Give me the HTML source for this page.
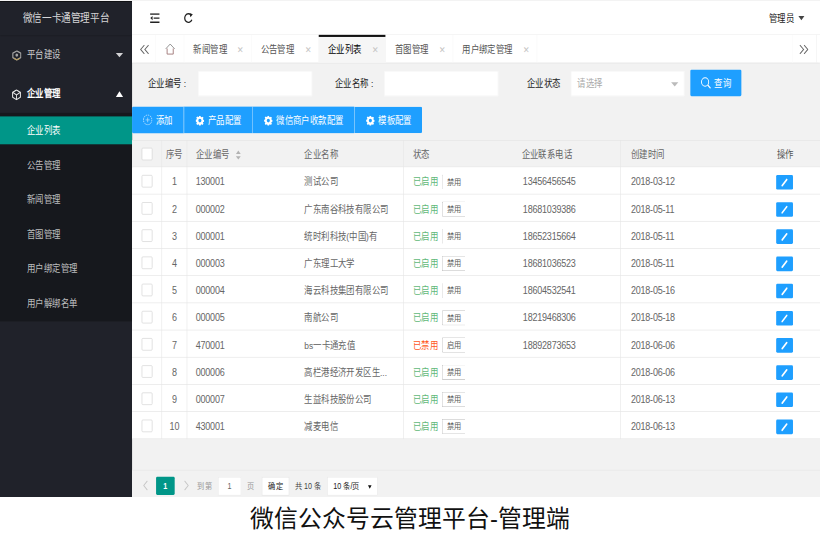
<!DOCTYPE html>
<html lang="zh-CN">
<head>
<meta charset="utf-8">
<title>微信公众号云管理平台-管理端</title>
<style>
*{box-sizing:border-box;margin:0;padding:0}
html,body{width:820px;height:540px;overflow:hidden;background:#fff}
body{position:relative;font-family:"Liberation Sans",sans-serif;}
#shot{position:absolute;left:0;top:0;width:1366px;height:713px;transform-origin:0 0;transform:scale(0.60029,0.69705);background:#f2f2f2;overflow:hidden;font-size:14px;color:#666;line-height:1}
#shot *{position:absolute}
.abs{position:absolute}
/* sidebar */
#side{left:0;top:0;width:220px;height:713px;background:#20222a}
#logo{left:0;top:0;width:220px;height:50px;line-height:54px;text-align:center;font-size:16px;color:rgba(255,255,255,.82);box-shadow:0 1px 2px 0 rgba(0,0,0,.15)}
.mi{left:0;width:220px;height:56px;line-height:56px;color:#fff}
.mi span{left:45px;top:0;white-space:nowrap}
.mi svg{left:19px;top:19px}
.tri{width:0;height:0;border:6px solid transparent}
#child{left:0;top:162px;width:220px;height:299px;background:#16181d}
.ci{left:0;width:220px;height:40px;line-height:40px;color:rgba(255,255,255,.72);white-space:nowrap}
.ci span{left:45px;top:0}
.ci.on{background:#009688;color:#fff}
/* header */
#hdr{left:220px;top:0;width:1146px;height:50px;background:#fff;border-bottom:1px solid #f0f0f0}
#tabs{left:220px;top:50px;width:1146px;height:40px;background:#fff;box-shadow:0 1px 2px 0 rgba(0,0,0,.12)}
.tab{top:0;height:40px;line-height:43px;color:#555;border-right:1px solid #f7f7f7;white-space:nowrap}
.tab span{left:15px;top:0}
.tab i{right:8px;top:0;width:18px;text-align:center;font-style:normal;color:#c4c4c4;font-size:13px}
.tab.on{background:#f6f6f6;color:#000}
.tab.on:before{content:"";position:absolute;left:0;top:0;width:100%;height:2.5px;background:#111}
/* form */
.lbl{top:100px;height:38px;line-height:41px;color:#222;text-align:right;white-space:nowrap}
.inp{top:102px;height:36px;background:#fff;border:1px solid #f6f6f6}
.btn{background:#1e9fff;color:#fff;height:38px;line-height:40px;white-space:nowrap}
/* table */
#thead{left:220px;top:201px;width:1146px;height:39px;background:#f2f2f2;border-top:1px solid #e6e6e6;border-bottom:1px solid #e6e6e6}
#tbody{left:220px;top:240px;width:1146px;height:390px;background:#fff}
.row{left:0;width:1146px;height:39px;border-bottom:1px solid #e6e6e6;line-height:38px;white-space:nowrap}
.vl{top:201px;width:1px;height:429px;background:#e6e6e6}
.cb{left:16px;top:11px;width:18px;height:18px;border:1px solid #d2d2d2;background:#fff;border-radius:2px}
.c1{left:50px;width:41px;text-align:center;top:2px}
.row .c1,.row .c2,.row .c5,.row .c6{font-size:15px;letter-spacing:-.35px}
.c2{left:106px;top:2px}
.c3{left:287px;top:2px}
.c4{left:468px;top:2px;color:#5fb878}
.c4.off{color:#ff5722}
.sb{left:516px;top:10px;width:39px;height:22px;line-height:20px;border:1px solid #b8b8b8;border-radius:2px 0 0 2px;border-right:none;font-size:12px;color:#555;background:#fff}
.sb b{left:7px;top:0;font-weight:normal}
.sb.l{border-top-color:transparent;border-bottom-color:transparent}
.c5{left:600px;width:190px;text-align:center;top:2px}
.c6{left:831px;top:2px}
.eb{left:1073px;top:11px;width:28px;height:21px;background:#1e9fff;border-radius:2px}
.eb svg{left:7px;top:4px}
/* pager */
#pager{left:220px;top:674px;width:1146px;height:39px;border-top:1px solid #e6e6e6;background:#f2f2f2;font-size:12px;color:#333;line-height:28px;white-space:nowrap}
#cap{position:absolute;left:0;top:502px;width:820px;text-align:center;font-size:23.8px;line-height:34px;color:#111;white-space:nowrap}
</style>
</head>
<body>
<div id="shot">
 <div id="side">
  <div id="logo">微信一卡通管理平台</div>
  <div class="mi" style="top:50px;color:rgba(255,255,255,.78)">
   <svg style="left:19.5px;top:22px" width="16" height="15" viewBox="0 0 16 15"><path d="M8 1 L14.6 4.300 V10.700 L8 14 L1.400 10.700 V4.300 Z" fill="none" stroke="#a4a4a4" stroke-width="1.900"/><path d="M3 11.600 L8 14 L13 11.600" fill="none" stroke="#b79a55" stroke-width="1.600"/><circle cx="8" cy="7" r="2.300" fill="#a4a4a4"/></svg>
   <span>平台建设</span>
   <div class="tri" style="left:193px;top:26px;border-top-color:rgba(255,255,255,.8)"></div>
  </div>
  <div class="mi" style="top:106px">
   <svg style="left:19.5px;top:21.500px" width="15" height="16" viewBox="0 0 15 16"><path d="M7.500 1 L14 4.600 V11.400 L7.500 15 L1 11.400 V4.600 Z" fill="none" stroke="#e6e6e6" stroke-width="1.700"/><path d="M1.600 4.800 L7.500 8.200 L13.400 4.800 M7.500 8.200 V14.600" fill="none" stroke="#e6e6e6" stroke-width="1.500"/></svg>
   <span style="font-weight:bold">企业管理</span>
   <div class="tri" style="left:193px;top:25px;border-width:0 6px 8px 6px;border-bottom-color:#fff"></div>
  </div>
  <div id="child">
   <div class="ci on" style="top:5px"><span>企业列表</span></div>
   <div class="ci" style="top:54.6px"><span>公告管理</span></div>
   <div class="ci" style="top:104.2px"><span>新闻管理</span></div>
   <div class="ci" style="top:153.8px"><span>首图管理</span></div>
   <div class="ci" style="top:203.4px"><span>用户绑定管理</span></div>
   <div class="ci" style="top:253px"><span>用户解绑名单</span></div>
  </div>
 </div>
 <div id="hdr">
  <svg style="left:30px;top:19px" width="16" height="14" viewBox="0 0 16 14"><path d="M0 1 H16 M6 7 H16 M0 13 H16" stroke="#222" stroke-width="2" fill="none"/><path d="M4.2 3.8 V10.2 L0.3 7 Z" fill="#222"/></svg>
  <svg style="left:86px;top:18px" width="16" height="16" viewBox="0 0 16 16"><path d="M13.6 10.4 A6.2 6.2 0 1 1 12.4 3.6" fill="none" stroke="#222" stroke-width="2.1"/><path d="M9.6 0.6 L15.2 2.6 L11.2 6.6 Z" fill="#222"/></svg>
  <div style="left:1061px;top:0;line-height:52px;color:#222;white-space:nowrap">管理员</div>
  <div class="tri" style="left:1110px;top:23px;border-width:6px 5.5px;border-top-color:#444"></div>
 </div>
 <div id="tabs">
  <svg style="left:13px;top:14px" width="16" height="14" viewBox="0 0 16 14"><path d="M7.5 0.8 L1.3 7 L7.5 13.2 M14.5 0.8 L8.3 7 L14.5 13.2" fill="none" stroke="#666" stroke-width="1.5"/></svg>
  <div style="left:39px;top:0;width:1px;height:40px;background:#f7f7f7"></div>
  <div class="tab" style="left:40px;width:47px">
   <svg style="left:15px;top:12px" width="17" height="17" viewBox="0 0 17 17"><path d="M1 8.2 L8.5 1.2 L16 8.2" fill="none" stroke="#8a8a8a" stroke-width="1.4"/><path d="M3.4 7.6 V15.6 H13.6 V7.6" fill="none" stroke="#a07878" stroke-width="1.4"/></svg>
  </div>
  <div class="tab" style="left:87px;width:112px"><span>新闻管理</span><i>✕</i></div>
  <div class="tab" style="left:199px;width:112px"><span>公告管理</span><i>✕</i></div>
  <div class="tab on" style="left:311px;width:112px"><span>企业列表</span><i>✕</i></div>
  <div class="tab" style="left:423px;width:112px"><span>首图管理</span><i>✕</i></div>
  <div class="tab" style="left:535px;width:140px"><span>用户绑定管理</span><i>✕</i></div>
  <div style="left:1100px;top:0;width:1px;height:40px;background:#fafafa"></div>
  <svg style="left:1111px;top:14px" width="16" height="14" viewBox="0 0 16 14"><path d="M1.5 0.8 L7.7 7 L1.5 13.2 M8.5 0.8 L14.7 7 L8.5 13.2" fill="none" stroke="#666" stroke-width="1.5"/></svg>
  <div style="left:1140px;top:0;width:1px;height:40px;background:#f0f0f0"></div>
 </div>
 <!--FORM-->
 <div class="lbl" style="left:230px;width:80px">企业编号 :</div>
 <div class="inp" style="left:330px;width:190px"></div>
 <div class="lbl" style="left:542px;width:80px">企业名称 :</div>
 <div class="inp" style="left:640px;width:190px"></div>
 <div class="lbl" style="left:858px;width:76px">企业状态</div>
 <div class="inp" style="left:951px;width:189px"><div style="left:10px;top:0;line-height:34px;color:#aaa;white-space:nowrap">请选择</div><div class="tri" style="left:166px;top:15px;border-top-color:#bbb"></div></div>
 <div class="btn" style="left:1150px;top:100px;width:85px;border-radius:2px">
  <svg style="left:17px;top:10px" width="18" height="18" viewBox="0 0 18 18"><circle cx="7.6" cy="7.6" r="6" fill="none" stroke="#fff" stroke-width="1.5"/><path d="M12 12 L16.6 16.6" stroke="#fff" stroke-width="1.8"/></svg>
  <div style="left:40px;top:0">查询</div>
 </div>
 <div class="btn" style="left:220px;top:153px;width:86px;border-radius:2px 0 0 2px">
  <svg style="left:18px;top:11px" width="16" height="16" viewBox="0 0 16 16"><circle cx="8" cy="8" r="7" fill="none" stroke="#fff" stroke-width="1.1" stroke-dasharray="2.2 1.4"/><path d="M8 4.6V11.400M4.6 8H11.400" stroke="#fff" stroke-width="1" opacity=".75"/></svg>
  <div style="left:40px;top:0">添加</div>
 </div>
 <div class="btn" style="left:306px;top:153px;width:114px;border-left:1px solid rgba(255,255,255,.5)"><svg style="left:19px;top:12.5px" width="14" height="14" viewBox="0 0 16 16"><path fill="#fff" fill-rule="evenodd" d="M6.6 0h2.8l.4 2.1 1.3.6 1.8-1.2 2 2-1.2 1.8.6 1.3 2.1.4v2.8l-2.1.4-.6 1.3 1.2 1.8-2 2-1.8-1.2-1.3.6-.4 2.1H6.6l-.4-2.1-1.3-.6-1.8 1.2-2-2 1.2-1.8-.6-1.3L-.4 9.4V6.6l2.100-.4.6-1.3L1.100 3.100l2-2 1.800 1.200 1.300-.6zM8 5a3 3 0 100 6 3 3 0 000-6z"/></svg><div style="left:39px;top:0">产品配置</div></div>
 <div class="btn" style="left:420px;top:153px;width:170px;border-left:1px solid rgba(255,255,255,.5)"><svg style="left:19px;top:12.5px" width="14" height="14" viewBox="0 0 16 16"><path fill="#fff" fill-rule="evenodd" d="M6.6 0h2.8l.4 2.1 1.3.6 1.8-1.2 2 2-1.2 1.8.6 1.3 2.1.4v2.8l-2.1.4-.6 1.3 1.2 1.8-2 2-1.8-1.2-1.3.6-.4 2.1H6.6l-.4-2.1-1.3-.6-1.8 1.2-2-2 1.2-1.8-.6-1.3L-.4 9.4V6.6l2.100-.4.6-1.3L1.100 3.100l2-2 1.800 1.200 1.300-.6zM8 5a3 3 0 100 6 3 3 0 000-6z"/></svg><div style="left:39px;top:0">微信商户收款配置</div></div>
 <div class="btn" style="left:590px;top:153px;width:113px;border-left:1px solid rgba(255,255,255,.5);border-radius:0 2px 2px 0"><svg style="left:19px;top:12.5px" width="14" height="14" viewBox="0 0 16 16"><path fill="#fff" fill-rule="evenodd" d="M6.6 0h2.8l.4 2.1 1.3.6 1.8-1.2 2 2-1.2 1.8.6 1.3 2.1.4v2.8l-2.1.4-.6 1.3 1.2 1.8-2 2-1.8-1.2-1.3.6-.4 2.1H6.6l-.4-2.1-1.3-.6-1.8 1.2-2-2 1.2-1.8-.6-1.3L-.4 9.4V6.6l2.100-.4.6-1.3L1.100 3.100l2-2 1.800 1.200 1.300-.6zM8 5a3 3 0 100 6 3 3 0 000-6z"/></svg><div style="left:39px;top:0">模板配置</div></div>
<!--/FORM-->
 <!--TABLE-->
 <div id="thead">
  <div class="cb" style="top:10px"></div>
  <div class="c1" style="top:0;line-height:41px">序号</div>
  <div class="c2" style="top:0;line-height:41px">企业编号</div>
  <div class="tri" style="left:173px;top:9px;border-width:5px 4.5px;border-bottom-color:#b2b2b2"></div>
  <div class="tri" style="left:173px;top:22px;border-width:5px 4.5px;border-top-color:#b2b2b2"></div>
  <div class="c3" style="top:0;line-height:41px">企业名称</div>
  <div class="c4" style="top:0;line-height:41px;color:#666">状态</div>
  <div class="c5" style="top:0;line-height:41px;left:596px">企业联系电话</div>
  <div class="c6" style="top:0;line-height:41px">创建时间</div>
  <div style="left:1074px;top:0;line-height:41px;color:#555">操作</div>
 </div>
 <div id="tbody">
  <div class="row" style="top:0px"><div class="cb"></div><div class="c1">1</div><div class="c2">130001</div><div class="c3">测试公司</div><div class="c4">已启用</div><div class="sb l"><b>禁用</b></div><div class="c5">13456456545</div><div class="c6">2018-03-12</div><div class="eb"><svg width="14" height="14" viewBox="0 0 14 14"><path d="M3 11.200 L10.600 2.600" stroke="#fff" stroke-width="2.600" stroke-linecap="round"/></svg></div></div>
  <div class="row" style="top:39px"><div class="cb"></div><div class="c1">2</div><div class="c2">000002</div><div class="c3">广东南谷科技有限公司</div><div class="c4">已启用</div><div class="sb"><b>禁用</b></div><div class="c5">18681039386</div><div class="c6">2018-05-11</div><div class="eb"><svg width="14" height="14" viewBox="0 0 14 14"><path d="M3 11.200 L10.600 2.600" stroke="#fff" stroke-width="2.600" stroke-linecap="round"/></svg></div></div>
  <div class="row" style="top:78px"><div class="cb"></div><div class="c1">3</div><div class="c2">000001</div><div class="c3">统时利科技(中国)有</div><div class="c4">已启用</div><div class="sb l"><b>禁用</b></div><div class="c5">18652315664</div><div class="c6">2018-05-11</div><div class="eb"><svg width="14" height="14" viewBox="0 0 14 14"><path d="M3 11.200 L10.600 2.600" stroke="#fff" stroke-width="2.600" stroke-linecap="round"/></svg></div></div>
  <div class="row" style="top:117px"><div class="cb"></div><div class="c1">4</div><div class="c2">000003</div><div class="c3">广东理工大学</div><div class="c4">已启用</div><div class="sb"><b>禁用</b></div><div class="c5">18681036523</div><div class="c6">2018-05-11</div><div class="eb"><svg width="14" height="14" viewBox="0 0 14 14"><path d="M3 11.200 L10.600 2.600" stroke="#fff" stroke-width="2.600" stroke-linecap="round"/></svg></div></div>
  <div class="row" style="top:156px"><div class="cb"></div><div class="c1">5</div><div class="c2">000004</div><div class="c3">海云科技集团有限公司</div><div class="c4">已启用</div><div class="sb l"><b>禁用</b></div><div class="c5">18604532541</div><div class="c6">2018-05-16</div><div class="eb"><svg width="14" height="14" viewBox="0 0 14 14"><path d="M3 11.200 L10.600 2.600" stroke="#fff" stroke-width="2.600" stroke-linecap="round"/></svg></div></div>
  <div class="row" style="top:195px"><div class="cb"></div><div class="c1">6</div><div class="c2">000005</div><div class="c3">南航公司</div><div class="c4">已启用</div><div class="sb"><b>禁用</b></div><div class="c5">18219468306</div><div class="c6">2018-05-18</div><div class="eb"><svg width="14" height="14" viewBox="0 0 14 14"><path d="M3 11.200 L10.600 2.600" stroke="#fff" stroke-width="2.600" stroke-linecap="round"/></svg></div></div>
  <div class="row" style="top:234px"><div class="cb"></div><div class="c1">7</div><div class="c2">470001</div><div class="c3">bs一卡通充值</div><div class="c4 off">已禁用</div><div class="sb"><b>启用</b></div><div class="c5">18892873653</div><div class="c6">2018-06-06</div><div class="eb"><svg width="14" height="14" viewBox="0 0 14 14"><path d="M3 11.200 L10.600 2.600" stroke="#fff" stroke-width="2.600" stroke-linecap="round"/></svg></div></div>
  <div class="row" style="top:273px"><div class="cb"></div><div class="c1">8</div><div class="c2">000006</div><div class="c3">高栏港经济开发区生...</div><div class="c4">已启用</div><div class="sb"><b>禁用</b></div><div class="c5"></div><div class="c6">2018-06-06</div><div class="eb"><svg width="14" height="14" viewBox="0 0 14 14"><path d="M3 11.200 L10.600 2.600" stroke="#fff" stroke-width="2.600" stroke-linecap="round"/></svg></div></div>
  <div class="row" style="top:312px"><div class="cb"></div><div class="c1">9</div><div class="c2">000007</div><div class="c3">生益科技股份公司</div><div class="c4">已启用</div><div class="sb"><b>禁用</b></div><div class="c5"></div><div class="c6">2018-06-13</div><div class="eb"><svg width="14" height="14" viewBox="0 0 14 14"><path d="M3 11.200 L10.600 2.600" stroke="#fff" stroke-width="2.600" stroke-linecap="round"/></svg></div></div>
  <div class="row" style="top:351px"><div class="cb"></div><div class="c1">10</div><div class="c2">430001</div><div class="c3">减麦电信</div><div class="c4">已启用</div><div class="sb"><b>禁用</b></div><div class="c5"></div><div class="c6">2018-06-13</div><div class="eb"><svg width="14" height="14" viewBox="0 0 14 14"><path d="M3 11.200 L10.600 2.600" stroke="#fff" stroke-width="2.600" stroke-linecap="round"/></svg></div></div>
 </div>
 <div class="vl" style="left:269px"></div>
 <div class="vl" style="left:311px"></div>
 <div class="vl" style="left:672px"></div>
 <div class="vl" style="left:1033px"></div>
<!--/TABLE-->
 <!--PAGER-->
 <div id="pager">
  <svg style="left:18px;top:14px" width="9" height="15" viewBox="0 0 9 15"><path d="M7.500 1 L1.500 7.500 L7.500 14" fill="none" stroke="#c6c6c6" stroke-width="1.5"/></svg>
  <div style="left:40px;top:9px;width:31px;height:26px;background:#009688;color:#fff;text-align:center;border-radius:2px;line-height:26px;font-weight:bold">1</div>
  <svg style="left:86px;top:14px" width="9" height="15" viewBox="0 0 9 15"><path d="M1.500 1 L7.500 7.500 L1.500 14" fill="none" stroke="#c6c6c6" stroke-width="1.5"/></svg>
  <div style="left:109px;top:9px;color:#999">到第</div>
  <div style="left:143px;top:9px;width:39px;height:27px;background:#fff;border:1px solid #e8e8e8;text-align:center;line-height:25px;color:#666">1</div>
  <div style="left:192px;top:9px;color:#999">页</div>
  <div style="left:216px;top:9px;width:46px;height:27px;background:#fff;border:1px solid #e2e2e2;text-align:center;line-height:25px;color:#222">确定</div>
  <div style="left:271px;top:9px;color:#444">共 10 条</div>
  <div style="left:325px;top:9px;width:84px;height:27px;background:#fff;border:1px solid #e8e8e8;line-height:25px;color:#222"><div style="left:9px;top:0">10 条/页</div><div class="tri" style="left:67px;top:11px;border-width:5px 3.500px;border-top-color:#111"></div></div>
 </div>
<!--/PAGER-->
</div>
<div style="position:absolute;left:0;top:0;width:820px;height:1px;background:#f3f3f3"></div><div style="position:absolute;left:0;top:1px;width:132px;height:1px;background:#101114"></div>
<div id="cap">微信公众号云管理平台-管理端</div>
</body>
</html>
